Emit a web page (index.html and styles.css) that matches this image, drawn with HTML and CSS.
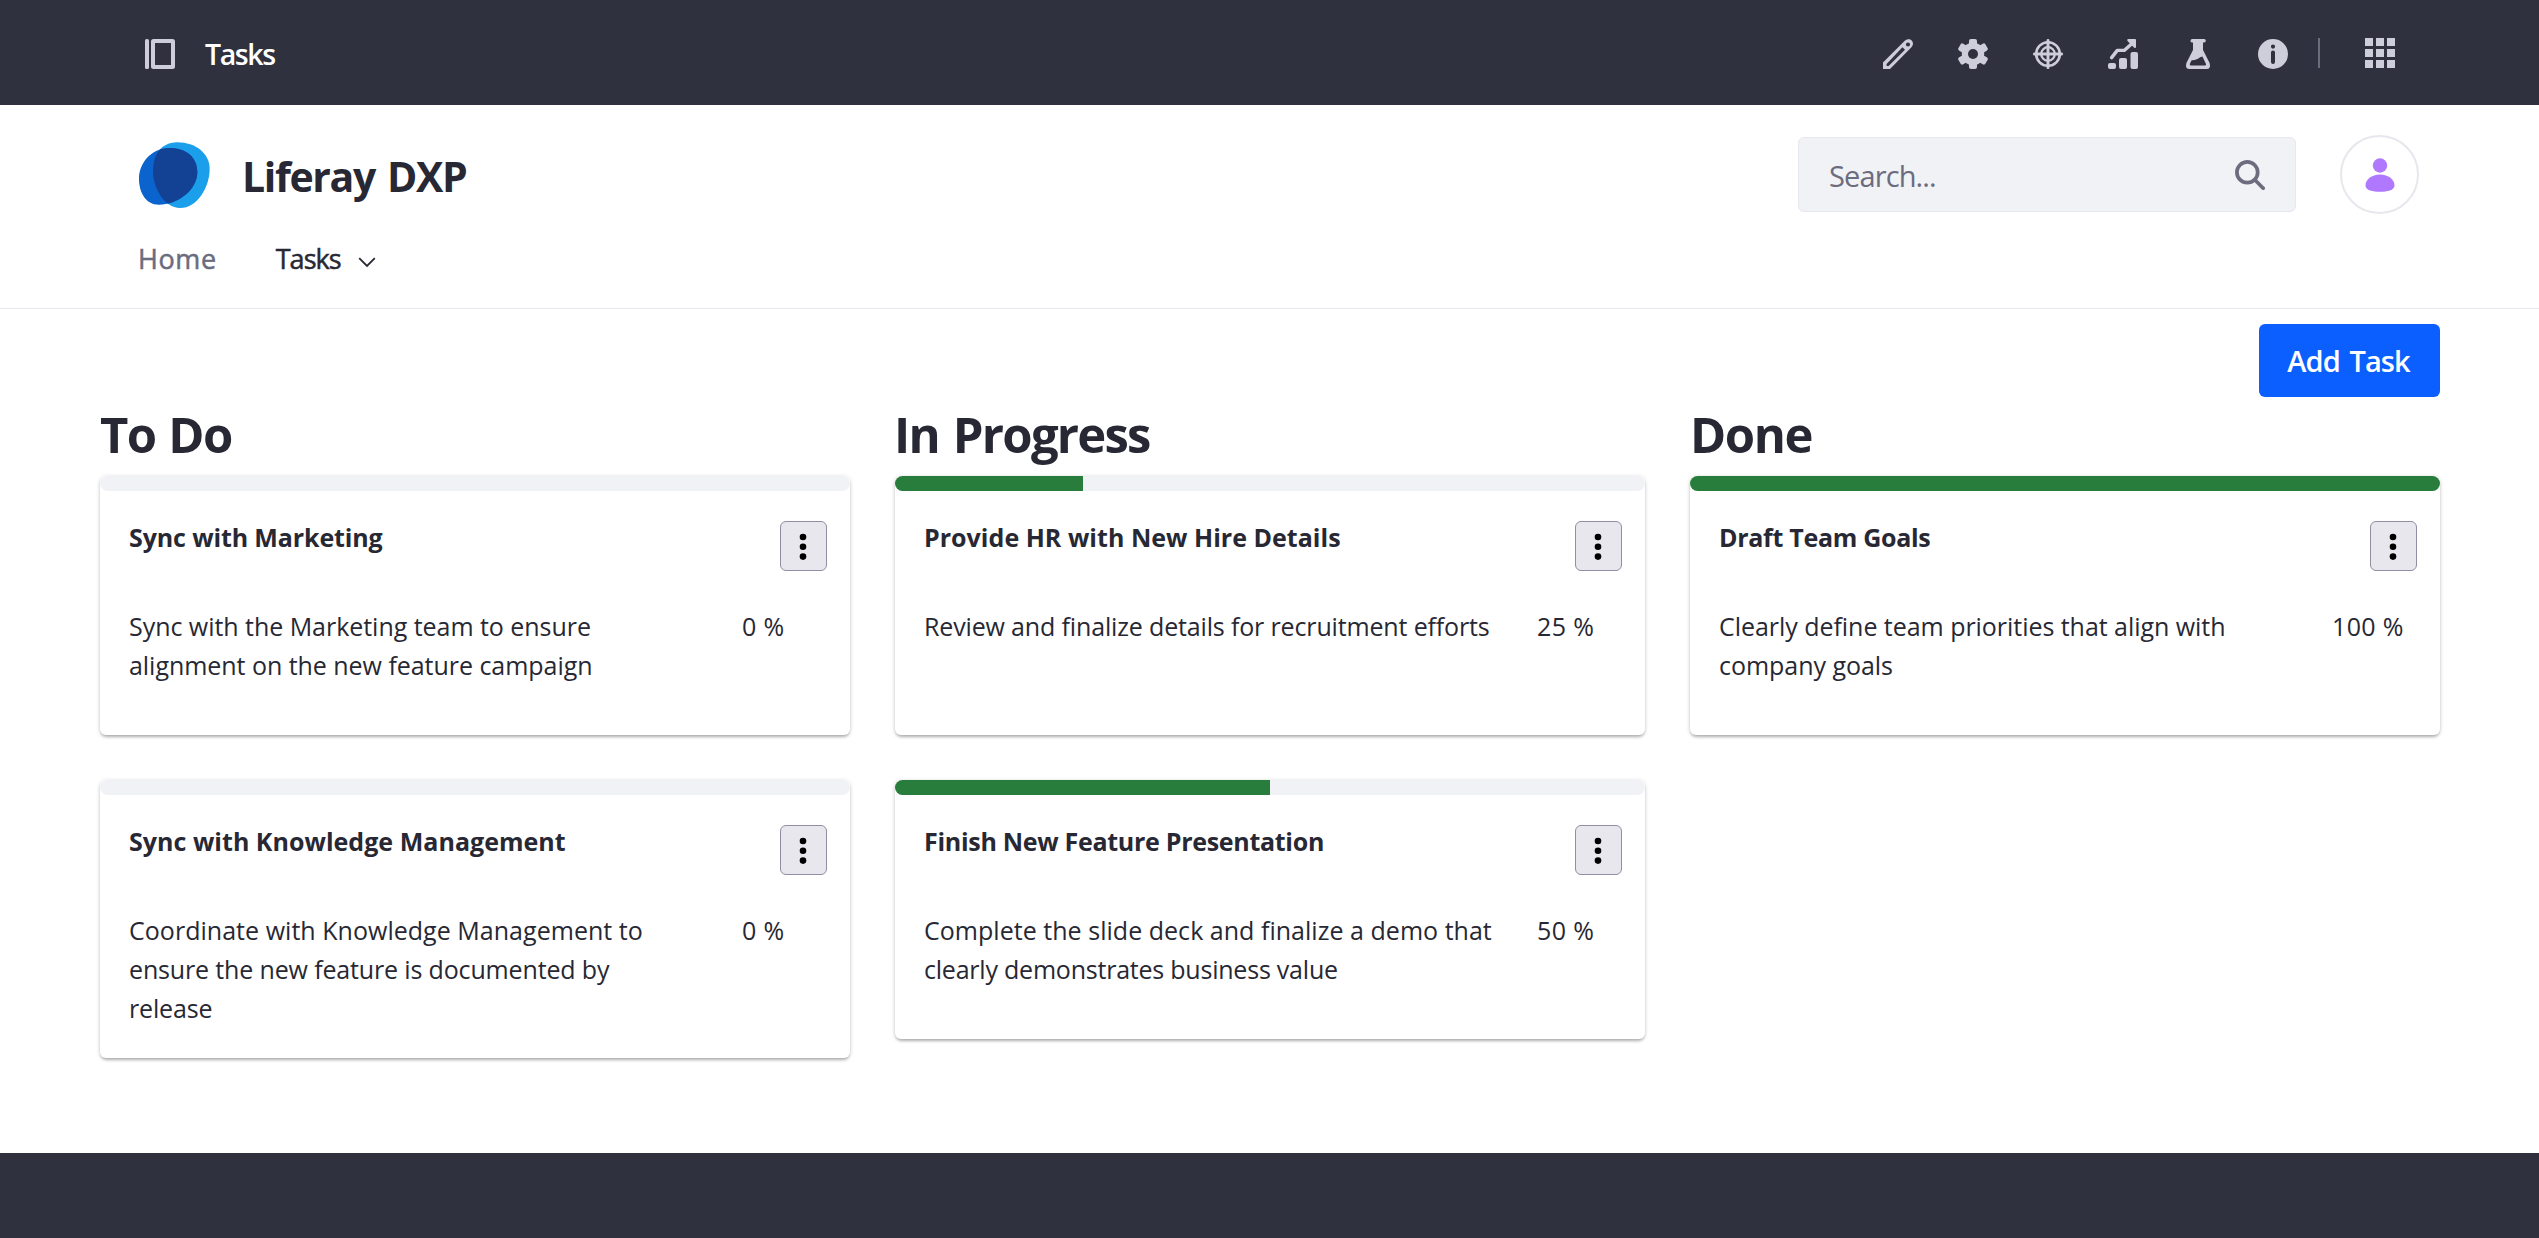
FILE: index.html
```
<!DOCTYPE html>
<html lang="en">
<head>
<meta charset="utf-8">
<title>Tasks</title>
<link rel="stylesheet" href="styles.css">
</head>
<body>
<div class="control-bar">
  <svg class="icon" viewBox="0 0 30 30"><rect x="0" y="0" width="4" height="30" rx="1.6"/><path fill-rule="evenodd" d="M8.500 0H27.500Q30 0 30 2.500V27.500Q30 30 27.500 30H8.500Q6 30 6 27.500V2.500Q6 0 8.500 0ZM10 4V26H26V4Z"/></svg>
  <span class="control-title">Tasks</span>
  <div class="control-actions">
    <svg class="icon" viewBox="0 0 30 30"><path fill-rule="evenodd" d="M0 23.500L21.500 2C24-.5 27-.3 28.700 1.500C30.500 3.300 30.500 6.200 28.200 8.500L7 30H0ZM3.600 25V27H5.600L22 10.800L19.400 8.300ZM25 3.400A2.100 2.100 0 1 0 25 7.600A2.100 2.100 0 1 0 25 3.400Z"/></svg>
    <svg class="icon" viewBox="0 0 30 30"><defs><mask id="hub"><rect width="30" height="30" fill="#fff"/><circle cx="15" cy="15" r="5" fill="#000"/></mask></defs><g mask="url(#hub)"><circle cx="15" cy="15" r="11.200"/><rect x="11" y="0" width="8" height="30" rx="2"/><rect x="11" y="-.6" width="8" height="31.200" rx="2" transform="rotate(60 15 15)"/><rect x="11" y="-.6" width="8" height="31.200" rx="2" transform="rotate(120 15 15)"/></g></svg>
    <svg class="icon line" viewBox="0 0 30 30"><circle cx="15" cy="15" r="11.800" stroke-width="2.600"/><circle cx="15" cy="15" r="6.800" stroke-width="2.300"/><path d="M15 1.400V28.600M1.400 15H28.600" stroke-width="2.900"/></svg>
    <svg class="icon" viewBox="0 0 30 30"><rect x="0" y="24" width="8" height="6" rx="2"/><rect x="11" y="19" width="8" height="11" rx="2"/><rect x="22.500" y="13" width="7.500" height="17" rx="2"/><path class="trend" d="M3.600 18.600L9.300 11.400H16.200L24 4.500"/><path d="M20 0H27Q28 0 28 1V8.500Q26.500 9.500 25.500 8L19.500 2Q18.600.6 20 0Z"/></svg>
    <svg class="icon" viewBox="0 0 30 30"><path fill-rule="evenodd" d="M9.300 0H21.200Q22.800 0 22.800 1.700T21.200 3.500H20V11L26.600 24Q28.200 30 23.500 30H6.500Q1.800 30 3.400 24L10 11V3.500H8.800Q7.500 3.400 7.500 1.700T9.300 0ZM8.600 21.200L6.800 25Q6.600 26.400 7.800 26.400H22.200Q23.400 26.400 23 25L19.400 17.600Q17 18 15 19.800Q12 21.600 8.600 21.200Z"/></svg>
    <svg class="icon" viewBox="0 0 30 30"><path fill-rule="evenodd" d="M15 0A15 15 0 1 1 15 30A15 15 0 1 1 15 0ZM15 5.500A2.100 2.100 0 1 0 15 9.700A2.100 2.100 0 1 0 15 5.500ZM13 13.200V23Q13 25 15 25T17 23V13.200Q17 11.500 15 11.500T13 13.200Z"/></svg>
    <span class="divider"></span>
    <svg class="icon grid-icon" viewBox="0 0 30 30"><path d="M0 0h8v8h-8zM11 0h8v8h-8zM22 0h8v8h-8zM0 11h8v8h-8zM11 11h8v8h-8zM22 11h8v8h-8zM0 22h8v8h-8zM11 22h8v8h-8zM22 22h8v8h-8z"/></svg>
  </div>
</div>

<header class="site-header">
  <div class="brand-row">
    <svg class="logo" viewBox="0 0 252 228"><defs><clipPath id="right-lobe"><path d="M57 105C57 60 75 17 130 16C185 16 227 50 227 95C227 150 190 213 138 213C90 213 57 150 57 105Z"/></clipPath></defs><path fill="#1b9fea" d="M57 105C57 60 75 17 130 16C185 16 227 50 227 95C227 150 190 213 138 213C90 213 57 150 57 105Z"/><path fill="#0b63ce" d="M15 125C15 80 50 34 105 33C155 32 190 60 190 105C190 160 130 203 75 203C35 203 15 165 15 125Z"/><path fill="#134194" clip-path="url(#right-lobe)" d="M15 125C15 80 50 34 105 33C155 32 190 60 190 105C190 160 130 203 75 203C35 203 15 165 15 125Z"/></svg>
    <span class="brand">Liferay DXP</span>
    <div class="search"><span>Search...</span><svg class="search-icon" viewBox="0 0 30 30"><circle cx="12.300" cy="12.300" r="10.400"/><path d="M20 20L28.200 28.200"/></svg></div>
    <div class="avatar"><svg viewBox="0 0 30 34"><circle cx="15" cy="7.500" r="7.200"/><path d="M15 16.500C23.500 16.500 29.500 21.500 29.500 27.500C29.500 32.500 22 33.800 15 33.800S.5 32.500.5 27.500C.5 21.500 6.500 16.500 15 16.500Z"/></svg></div>
  </div>
  <nav class="nav">
    <span class="nav-home">Home</span>
    <span class="nav-tasks">Tasks</span>
    <svg class="chevron" viewBox="0 0 18 11"><path d="M1.200 1.200L9 9L16.800 1.200"/></svg>
  </nav>
</header>

<main class="content">
  <div class="toolbar"><button class="add">Add Task</button></div>
  <div class="board">
    <section class="column">
      <h2 class="todo">To Do</h2>
      <article class="card">
        <div class="progress"><div class="fill" style="width:0%"></div></div>
        <div class="body">
          <div class="head"><h3>Sync with Marketing</h3><button class="menu"><svg viewBox="0 0 8 28"><circle cx="4" cy="4" r="3.300"/><circle cx="4" cy="13.800" r="3.300"/><circle cx="4" cy="23.600" r="3.300"/></svg></button></div>
          <div class="info"><p>Sync with the Marketing team to ensure<br>alignment on the new feature campaign</p><span>0 %</span></div>
        </div>
      </article>
      <article class="card">
        <div class="progress"><div class="fill" style="width:0%"></div></div>
        <div class="body">
          <div class="head"><h3 class="loose">Sync with Knowledge Management</h3><button class="menu"><svg viewBox="0 0 8 28"><circle cx="4" cy="4" r="3.300"/><circle cx="4" cy="13.800" r="3.300"/><circle cx="4" cy="23.600" r="3.300"/></svg></button></div>
          <div class="info"><p><span class="loose">Coordinate with Knowledge Management to</span><br><span class="snug">ensure the new feature is documented by</span><br><span class="snug">release</span></p><span>0 %</span></div>
        </div>
      </article>
    </section>
    <section class="column">
      <h2 class="doing">In Progress</h2>
      <article class="card">
        <div class="progress"><div class="fill" style="width:25%"></div></div>
        <div class="body">
          <div class="head"><h3 class="loose">Provide HR with New Hire Details</h3><button class="menu"><svg viewBox="0 0 8 28"><circle cx="4" cy="4" r="3.300"/><circle cx="4" cy="13.800" r="3.300"/><circle cx="4" cy="23.600" r="3.300"/></svg></button></div>
          <div class="info"><p class="snug">Review and finalize details for recruitment efforts</p><span>25 %</span></div>
        </div>
      </article>
      <article class="card">
        <div class="progress"><div class="fill" style="width:50%"></div></div>
        <div class="body">
          <div class="head"><h3 class="tight">Finish New Feature Presentation</h3><button class="menu"><svg viewBox="0 0 8 28"><circle cx="4" cy="4" r="3.300"/><circle cx="4" cy="13.800" r="3.300"/><circle cx="4" cy="23.600" r="3.300"/></svg></button></div>
          <div class="info"><p><span class="loose">Complete the slide deck and finalize a demo that</span><br><span class="snugger">clearly demonstrates business value</span></p><span>50 %</span></div>
        </div>
      </article>
    </section>
    <section class="column">
      <h2 class="done">Done</h2>
      <article class="card">
        <div class="progress"><div class="fill" style="width:100%"></div></div>
        <div class="body">
          <div class="head"><h3 class="tight">Draft Team Goals</h3><button class="menu"><svg viewBox="0 0 8 28"><circle cx="4" cy="4" r="3.300"/><circle cx="4" cy="13.800" r="3.300"/><circle cx="4" cy="23.600" r="3.300"/></svg></button></div>
          <div class="info"><p>Clearly define team priorities that align with<br>company goals</p><span>100 %</span></div>
        </div>
      </article>
    </section>
  </div>
</main>
<footer class="footer"></footer>
</body>
</html>
```
FILE: styles.css
```
* { box-sizing: border-box; }
body {
  margin: 0;
  height: 1238px;
  display: flex;
  flex-direction: column;
  overflow: hidden;
  background: #fff;
  color: #272833;
  font-family: "Open Sans", "Noto Sans", sans-serif;
  font-size: 25px;
  line-height: 39.375px;
}
h2, h3, p { margin: 0; }
svg { display: block; flex: none; }
button { font-family: inherit; }

.control-bar {
  flex: none;
  height: 105px;
  padding: 3px 144px 0 145px;
  display: flex;
  align-items: center;
  background: #30313f;
}
.icon { width: 30px; height: 30px; fill: #cdced9; }
.icon.line { fill: none; stroke: #cdced9; stroke-linecap: round; }
.trend { fill: none; stroke: #cdced9; stroke-width: 3.400; stroke-linecap: round; stroke-linejoin: round; }
.control-title {
  margin-left: 30px;
  padding-top: 1px;
  color: #fff;
  font-size: 28.500px;
  font-weight: 600;
  letter-spacing: -1.400px;
}
.control-actions { margin-left: auto; display: flex; align-items: center; gap: 45px; }
.divider { width: 2px; height: 30px; margin: -2px 0 0 -15px; background: #6b6c7e; }
.grid-icon { margin-top: -2px; }

.site-header {
  flex: none;
  height: 204px;
  padding: 30px 120px 0 134px;
  border-bottom: 1px solid #e7e7ed;
}
.brand-row { height: 79px; display: flex; align-items: center; }
.logo { width: 84px; height: 76px; }
.brand {
  margin-left: 24px;
  padding-top: 5px;
  font-size: 41px;
  font-weight: 700;
  letter-spacing: -1.380px;
  word-spacing: 3px;
}
.search {
  width: 498px;
  height: 75px;
  margin-left: auto;
  padding: 2px 30px 0 30px;
  display: flex;
  align-items: center;
  justify-content: space-between;
  border: 1px solid #e7e7ed;
  border-radius: 6px;
  background: #f1f2f5;
  color: #6b6c7e;
  font-size: 29px;
  letter-spacing: -0.880px;
}
.search-icon { width: 30px; height: 30px; margin-top: -2px; fill: none; stroke: #6b6c7e; stroke-width: 3.700; stroke-linecap: round; }
.avatar {
  width: 79px;
  height: 79px;
  margin-left: 44px;
  display: flex;
  align-items: center;
  justify-content: center;
  border: 2px solid #e7e7ed;
  border-radius: 50%;
}
.avatar svg { width: 30px; height: 34px; fill: #af78ff; }
.nav {
  margin: 24px 0 0 4px;
  height: 42px;
  display: flex;
  align-items: center;
  font-size: 27px;
  font-weight: 500;
  -webkit-text-stroke: 0.500px currentColor;
}
.nav-home { color: #6b6c7e; letter-spacing: 0.600px; }
.nav-tasks { margin-left: 59px; letter-spacing: -0.980px; }
.chevron { width: 18px; height: 11px; margin: 7px 0 0 17px; fill: none; stroke: #272833; stroke-width: 1.800; }

.content { flex: none; height: 844px; padding: 15px 99px 0 100px; }
.toolbar { display: flex; justify-content: flex-end; }
.add {
  width: 181px;
  height: 73px;
  padding: 0 2px 0 0;
  border: 0;
  border-radius: 6px;
  background: #0b5fff;
  color: #fff;
  font-size: 29px;
  font-weight: 600;
  letter-spacing: -0.920px;
  word-spacing: 3px;
}
.board { display: grid; grid-template-columns: repeat(3, 750px); column-gap: 45px; }
h2 { margin-bottom: 5px; font-size: 49px; line-height: 74px; font-weight: 700; }
.todo { letter-spacing: -1.700px; word-spacing: 2px; }
.doing { margin-left: -1px; letter-spacing: -1.770px; word-spacing: 3px; }
.done { letter-spacing: -1.470px; }
.card {
  min-height: 259px;
  margin-bottom: 45px;
  border-radius: 6px;
  background: #fff;
  box-shadow: 0 1px 5px -1px rgba(0, 0, 0, 0.3), 0 3px 3px -1px rgba(0, 0, 0, 0.2);
}
.progress { height: 15px; overflow: hidden; border-radius: 7.500px; background: #f1f2f5; }
.fill { height: 100%; background: #287d3c; }
.body { padding: 27px 23px 29px 29px; }
.head { height: 88.500px; display: flex; justify-content: space-between; align-items: flex-start; }
h3 { font-size: 25px; line-height: 39.375px; font-weight: 700; letter-spacing: -0.120px; }
.loose { letter-spacing: 0.030px; }
.tight { letter-spacing: -0.290px; }
.menu {
  width: 47px;
  height: 50px;
  margin-top: 3px;
  padding: 2px 2px 0 0;
  display: flex;
  align-items: center;
  justify-content: center;
  border: 1px solid #8f8fa3;
  border-radius: 6px;
  background: #e7e7ed;
}
.menu svg { width: 8px; height: 28px; fill: #000; }
.info { display: grid; grid-template-columns: 613px auto; white-space: nowrap; letter-spacing: -0.040px; }
.info > span { letter-spacing: 0.350px; }
.snug { letter-spacing: -0.150px; }
.snugger { letter-spacing: -0.220px; }
.footer { flex: 1; background: #30313f; }
```
